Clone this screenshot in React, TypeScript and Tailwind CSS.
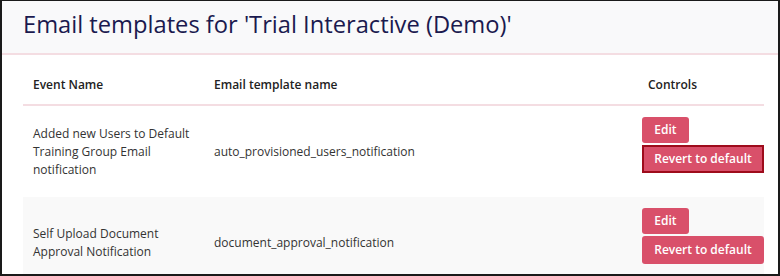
import React from "react";

const rows = [
  {
    event: ["Added new Users to Default", "Training Group Email", "notification"],
    tpl: "auto_provisioned_users_notification",
    focus: true,
    bg: "bg-white",
  },
  {
    event: ["Self Upload Document", "Approval Notification"],
    tpl: "document_approval_notification",
    focus: false,
    bg: "bg-[#f9f9f9]",
  },
];

export default function App() {
  return (
    <div
      className="w-[780px] h-[276px] overflow-hidden bg-white border-t border-l-2 border-r-2 border-b-2 border-[#1a1a1a] box-border"
      style={{ fontFamily: '"Open Sans", "Noto Sans", sans-serif' }}
    >
      <div className="h-[54px] bg-[#f9f9fa] border-b-2 border-[#f4dde2] flex items-center pl-[21px]">
        <h1 className="text-[23.7px] leading-none text-[#1b1a4f] pb-[4px]">
          Email templates for 'Trial Interactive (Demo)'
        </h1>
      </div>
      <div className="pl-[21px] pr-[14px]">
        <div className="pt-[21px] pb-[10px] leading-[18px] flex items-center border-b-2 border-[#f4dde2] text-[12px] font-semibold text-[#222]">
          <div className="w-[181px] pl-[10px]">Event Name</div>
          <div className="w-[434px] pl-[10px]">Email template name</div>
          <div className="pl-[10px]">Controls</div>
        </div>
        {rows.map((r, i) => (
          <div key={i} className={`flex items-center h-[91px] ${r.bg} text-[12px] leading-[18px] text-[#333]`}>
            <div className="w-[181px] pl-[10px]">
              {r.event.map((l, j) => (
                <div key={j}>{l}</div>
              ))}
            </div>
            <div className="w-[438px] pl-[10px]">{r.tpl}</div>
            <div className="flex flex-col items-start gap-[2px] pb-[13px]">
              <button className="h-[26px] w-[47px] rounded-[3px] bg-[#d9506a] text-white text-[12px] font-semibold leading-none">
                Edit
              </button>
              <button
                className={`h-[28px] w-[122px] text-white text-[12px] font-semibold leading-none bg-[#d9506a] ${
                  r.focus ? "border-2 border-[#9e0c1c]" : "rounded-[3px]"
                }`}
              >
                Revert to default
              </button>
            </div>
          </div>
        ))}
      </div>
    </div>
  );
}
